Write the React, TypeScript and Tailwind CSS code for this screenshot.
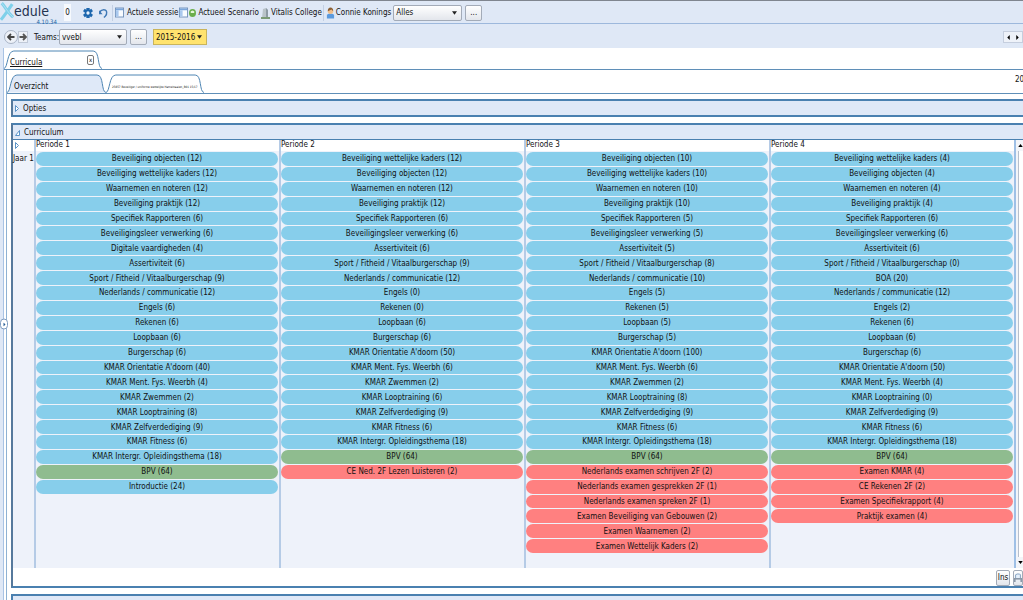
import React from "react";

type Kind = "blue" | "green" | "red";
type Item = { name: string; kind: Kind };

const tone: Record<Kind, string> = {
  blue: "bg-[#87ceeb]",
  green: "bg-[#8fbc8f]",
  red: "bg-[#ff8080]",
};

const make = (blue: string[], rest: [string, Kind][]): Item[] => [
  ...blue.map((name) => ({ name, kind: "blue" as Kind })),
  ...rest.map(([name, kind]) => ({ name, kind })),
];

const periods: { title: string; items: Item[] }[] = [
  {
    title: "Periode 1",
    items: make(
      [
        "Beveiliging objecten (12)", "Beveiliging wettelijke kaders (12)", "Waarnemen en noteren (12)",
        "Beveiliging praktijk (12)", "Specifiek Rapporteren (6)", "Beveiligingsleer verwerking (6)",
        "Digitale vaardigheden (4)", "Assertiviteit (6)", "Sport / Fitheid / Vitaalburgerschap (9)",
        "Nederlands / communicatie (12)", "Engels (6)", "Rekenen (6)", "Loopbaan (6)", "Burgerschap (6)",
        "KMAR Orientatie A'doorn (40)", "KMAR Ment. Fys. Weerbh (4)", "KMAR Zwemmen (2)",
        "KMAR Looptraining (8)", "KMAR Zelfverdediging (9)", "KMAR Fitness (6)",
        "KMAR Intergr. Opleidingsthema (18)",
      ],
      [["BPV (64)", "green"], ["Introductie (24)", "blue"]],
    ),
  },
  {
    title: "Periode 2",
    items: make(
      [
        "Beveiliging wettelijke kaders (12)", "Beveiliging objecten (12)", "Waarnemen en noteren (12)",
        "Beveiliging praktijk (12)", "Specifiek Rapporteren (6)", "Beveiligingsleer verwerking (6)",
        "Assertiviteit (6)", "Sport / Fitheid / Vitaalburgerschap (9)", "Nederlands / communicatie (12)",
        "Engels (0)", "Rekenen (0)", "Loopbaan (6)", "Burgerschap (6)", "KMAR Orientatie A'doorn (50)",
        "KMAR Ment. Fys. Weerbh (6)", "KMAR Zwemmen (2)", "KMAR Looptraining (6)",
        "KMAR Zelfverdediging (9)", "KMAR Fitness (6)", "KMAR Intergr. Opleidingsthema (18)",
      ],
      [["BPV (64)", "green"], ["CE Ned. 2F Lezen Luisteren (2)", "red"]],
    ),
  },
  {
    title: "Periode 3",
    items: make(
      [
        "Beveiliging objecten (10)", "Beveiliging wettelijke kaders (10)", "Waarnemen en noteren (10)",
        "Beveiliging praktijk (10)", "Specifiek Rapporteren (5)", "Beveiligingsleer verwerking (5)",
        "Assertiviteit (5)", "Sport / Fitheid / Vitaalburgerschap (8)", "Nederlands / communicatie (10)",
        "Engels (5)", "Rekenen (5)", "Loopbaan (5)", "Burgerschap (5)", "KMAR Orientatie A'doorn (100)",
        "KMAR Ment. Fys. Weerbh (6)", "KMAR Zwemmen (2)", "KMAR Looptraining (8)",
        "KMAR Zelfverdediging (9)", "KMAR Fitness (6)", "KMAR Intergr. Opleidingsthema (18)",
      ],
      [
        ["BPV (64)", "green"], ["Nederlands examen schrijven 2F (2)", "red"],
        ["Nederlands examen gesprekken 2F (1)", "red"], ["Nederlands examen spreken 2F (1)", "red"],
        ["Examen Beveiliging van Gebouwen (2)", "red"], ["Examen Waarnemen (2)", "red"],
        ["Examen Wettelijk Kaders (2)", "red"],
      ],
    ),
  },
  {
    title: "Periode 4",
    items: make(
      [
        "Beveiliging wettelijke kaders (4)", "Beveiliging objecten (4)", "Waarnemen en noteren (4)",
        "Beveiliging praktijk (4)", "Specifiek Rapporteren (6)", "Beveiligingsleer verwerking (6)",
        "Assertiviteit (6)", "Sport / Fitheid / Vitaalburgerschap (0)", "BOA (20)",
        "Nederlands / communicatie (12)", "Engels (2)", "Rekenen (6)", "Loopbaan (6)", "Burgerschap (6)",
        "KMAR Orientatie A'doorn (50)", "KMAR Ment. Fys. Weerbh (4)", "KMAR Looptraining (0)",
        "KMAR Zelfverdediging (9)", "KMAR Fitness (6)", "KMAR Intergr. Opleidingsthema (18)",
      ],
      [
        ["BPV (64)", "green"], ["Examen KMAR (4)", "red"], ["CE Rekenen 2F (2)", "red"],
        ["Examen Specifiekrapport (4)", "red"], ["Praktijk examen (4)", "red"],
      ],
    ),
  },
];

const btn =
  "flex h-4 shrink-0 items-center justify-center rounded-xs border border-[#a3abb8] bg-linear-to-b from-white to-[#e3e6ec]";

const select = "h-4 rounded-xs border border-[#a3abb8] bg-linear-to-b from-white to-[#e3e6ec]";

function Picker({ label, value, className }: { label: string; value: string; className: string }) {
  return (
    <span className={`grid shrink-0 items-center ${className}`}>
      <select
        aria-label={label}
        className="col-start-1 row-start-1 h-full w-full appearance-none bg-transparent pt-px pl-[2px] outline-none"
        defaultValue={value}
      >
        <option>{value}</option>
      </select>
      <svg viewBox="0 0 6 4" className="pointer-events-none col-start-1 row-start-1 mr-1 h-1 w-[5px] justify-self-end">
        <path d="M0 0h6L3 4z" fill="#222" />
      </svg>
    </span>
  );
}

function Logo() {
  return (
    <div className="flex h-[23px] w-[60px] shrink-0 items-start">
      <svg viewBox="0 0 16 21" className="h-[21px] w-[14px] shrink-0">
        <path d="M2 1C6 5 9 12 15 17M14 2C10 8 6 14 1 20" stroke="#7fd0ea" strokeWidth="3.500" fill="none" />
        <path d="M2 1C6 5 9 12 15 17" stroke="#b5e3f3" strokeWidth="1" fill="none" />
      </svg>
      <div className="flex flex-1 flex-col gap-[2px] pt-1">
        <span className="text-sm leading-3 text-[#1f3350]">edule</span>
        <span className="pr-[3px] text-right text-[6px] leading-[6px] text-[#2166a5]">4.10.34</span>
      </div>
    </div>
  );
}

function WindowIcon() {
  return (
    <svg viewBox="0 0 10 11" className="h-[11px] w-[9px] shrink-0">
      <rect x=".5" y=".5" width="9" height="10" fill="#f8fbff" stroke="#6f8fb8" />
      <path d="M1 2h8" stroke="#7ba7dc" strokeWidth="2" />
      <path d="M1 3h3v7H1z" fill="#a9c8ee" />
    </svg>
  );
}

function Tab({ label, fill, className, labelClass, children }: { label: string; fill: string; className: string; labelClass: string; children?: React.ReactNode }) {
  return (
    <div className={`grid h-[19px] shrink-0 ${className}`}>
      <svg viewBox="0 0 100 19" preserveAspectRatio="none" className="col-start-1 row-start-1 h-[19px] w-full">
        <path d="M0 18.500C4 18 3 1 10 1H91C98 1 95 18 100 18.500" fill={fill} stroke="#4f86b4" vectorEffect="non-scaling-stroke" />
      </svg>
      <div className="col-start-1 row-start-1 flex min-w-0 items-center">
        <button role="tab" className={`min-w-0 flex-1 pt-[6px] text-left whitespace-nowrap ${labelClass}`}>{label}</button>
        {children}
      </div>
    </div>
  );
}

const panel = "border-y-2 border-l-2 border-y-[#4a80b0] border-l-[#56799c]";

export default function App() {
  return (
    <div className="flex min-h-screen flex-col overflow-hidden bg-white font-['DejaVu_Sans_Condensed','DejaVu_Sans',sans-serif] text-[8px] leading-[10px] text-[#111]">
      <header className="flex h-6 items-center border-t border-b border-t-[#7f858f] border-b-[#9db8dc] bg-[#dfe8f6] pt-px whitespace-nowrap">
        <Logo />
        <span className="ml-1 flex h-[17px] w-[7px] items-center justify-center bg-[#f6f9fd]">0</span>
        <button aria-label="Instellingen" className="ml-3">
          <svg viewBox="0 0 12 12" className="h-3 w-[10px]">
            <path d="M4 0h4v2l2-1 2 3-2 1v2l2 1-2 3-2-1v2H4v-2l-2 1-2-3 2-1V5L0 4l2-3 2 1z" fill="#1c66ad" />
            <circle cx="6" cy="6" r="2" fill="#e8f1fb" />
          </svg>
        </button>
        <button aria-label="Vernieuwen" className="ml-[6px]">
          <svg viewBox="0 0 10 12" className="h-3 w-[9px]">
            <path d="M1 6C1 2 8 1 8.500 5s-1 4-3 6" fill="none" stroke="#3f78b5" strokeWidth="1.600" />
            <path d="M0 3v4.500h4z" fill="#3f78b5" />
          </svg>
        </button>
        <span className="ml-1 h-4 border-l border-[#c3d0e4]" />
        <button className="ml-[2px] flex items-center gap-[3px]"><WindowIcon />Actuele sessie</button>
        <span className="ml-px flex items-center"><WindowIcon /></span>
        <button className="ml-px flex items-center gap-[2px]">
          <svg viewBox="0 0 8 10" className="h-[10px] w-[7px]">
            <ellipse cx="4" cy="5" rx="4" ry="4.500" fill="#6bae4c" />
            <path d="M2 3l2-1 2 1v2H2z" fill="#e4f5d8" />
          </svg>
          Actueel Scenario
        </button>
        <button className="ml-[2px] flex items-center gap-px">
          <svg viewBox="0 0 9 12" className="h-3 w-[9px]">
            <path d="M2 2l3-1 2 2v8H1z" fill="#b9c3c9" />
            <path d="M5 1l2 2v8H5z" fill="#8d9aa3" />
            <path d="M0 11h9" stroke="#7b9a76" strokeWidth="2" />
          </svg>
          Vitalis College
        </button>
        <span className="ml-px h-4 border-l border-[#c3d0e4]" />
        <button className="ml-[2px] flex items-center gap-px">
          <svg viewBox="0 0 10 12" className="h-3 w-[9px]">
            <path d="M1 12V8q4-3 8 0v4z" fill="#5b9ade" />
            <circle cx="5" cy="4" r="3" fill="#f0be8b" />
            <path d="M2 4q0-4 3-4t3 4L6 2z" fill="#8a5f35" />
          </svg>
          Connie Konings
        </button>
        <Picker label="Filter" value="Alles" className={`ml-[2px] w-[69px] ${select}`} />
        <button className={`ml-[3px] w-[17px] ${btn}`}>...</button>
      </header>

      <div className="flex h-6 items-center bg-[#dfe8f6] pt-[2px] pl-1 whitespace-nowrap">
        <button aria-label="Terug" className="flex size-[14px] items-center justify-center rounded-full border border-[#a9b4c6] bg-[#edf1f8]">
          <svg viewBox="0 0 8 8" className="size-2"><path d="M7.500 4H1.500M4 1L1 4l3 3" stroke="#444" strokeWidth="1.800" fill="none" /></svg>
        </button>
        <button aria-label="Vooruit" className="flex h-3 w-[10px] items-center justify-center border border-[#c0c9d8] bg-[#edf1f8]">
          <svg viewBox="0 0 8 8" className="size-2"><path d="M.5 4h6M4 1l3 3-3 3" stroke="#555" strokeWidth="1.800" fill="none" /></svg>
        </button>
        <span className="ml-[6px] w-[25px] pt-px">Teams:</span>
        <Picker label="Teams" value="vvebl" className={`w-[68px] ${select}`} />
        <button className={`ml-[3px] w-[17px] ${btn}`}>...</button>
        <Picker label="Schooljaar" value="2015-2016" className="ml-[6px] h-4 w-[54px] border border-[#c9b45c] bg-[#ffe36e]" />
        <div className="ml-auto flex h-3 w-5 items-center justify-around border border-[#c5cede] bg-[#eef2f9]">
          <button aria-label="Vorige"><svg viewBox="0 0 3 6" className="h-[5px] w-[3px]"><path d="M3 0v6L0 3z" /></svg></button>
          <button aria-label="Volgende"><svg viewBox="0 0 3 6" className="h-[5px] w-[3px]"><path d="M0 0v6l3-3z" /></svg></button>
        </div>
      </div>

      <div className="flex flex-1">
        <div className="relative w-1 shrink-0 border-r border-[#a9c3e4] bg-[#dfe8f6]">
          <button aria-label="Zijbalk" className="absolute top-1/2 left-0 flex h-[11px] w-2 -translate-y-1/2 items-center justify-center rounded-full border border-[#7f9cc0] bg-white">
            <svg viewBox="0 0 3 6" className="h-1 w-[3px]"><path d="M0 0v6l3-3z" fill="#2a5f96" /></svg>
          </button>
        </div>
        <main className="flex min-w-0 flex-1 flex-col">
          <div className="flex h-[22px] items-end border-b border-[#5f8fb8]">
            <Tab label="Curricula" fill="#fff" className="w-[98px]" labelClass="pl-[6px] underline">
              <button aria-label="Sluiten" className="mr-2 flex h-[10px] w-[7px] items-center justify-center rounded-xs border border-[#777] text-[6px]">x</button>
            </Tab>
          </div>
          <div className="ml-[2px] flex flex-1 flex-col border-l border-[#8fb2d4]">
            <div className="flex h-6 items-end border-b border-[#5f8fb8]">
              <Tab label="Overzicht" fill="#dfe9f8" className="w-[99px]" labelClass="pl-[7px]" />
              <Tab label="25657 Beveiliger / uniforme wettelijke Hamelnaaien_B01 15/17" fill="#fff" className="w-[98px]" labelClass="pl-[6px] text-[3px]" />
              <span className="mb-1 ml-auto w-2 self-center whitespace-nowrap">20</span>
            </div>
            <div className="flex flex-1 flex-col gap-[6px] pt-[5px] pl-1">
              <section className={`h-[18px] bg-[#dfe8f7] ${panel}`}>
                <button className="flex h-full items-center gap-1 pt-px pl-[2px]">
                  <svg viewBox="0 0 4 7" className="h-[7px] w-1"><path d="M.5.5v6l3-3z" fill="#fff" stroke="#5a93c8" /></svg>
                  Opties
                </button>
              </section>
              <section className={`flex flex-1 flex-col ${panel}`}>
                <button className="flex h-[15px] w-full shrink-0 items-center gap-1 border-b border-[#4a80b0] bg-[#dfe8f7] pt-[2px] pl-[2px]">
                  <svg viewBox="0 0 5 6" className="h-[6px] w-[5px]"><path d="M.5 5.500h4v-5z" fill="#fff" stroke="#5a93c8" /></svg>
                  Curriculum
                </button>
                <div className="flex flex-1">
                  <div className="flex flex-1">
                    <div className="flex w-[21px] shrink-0 flex-col whitespace-nowrap">
                      <span className="flex h-[11px] items-center pl-[2px]"><svg viewBox="0 0 4 7" className="h-[7px] w-1"><path d="M.5.5v6l3-3z" fill="#fff" stroke="#5a93c8" /></svg></span>
                      <div className="flex-1 bg-[#eef2fa] pt-[3px]">Jaar 1</div>
                    </div>
                    {periods.map((p) => (
                      <section key={p.title} className="flex flex-1 flex-col border-l-2 border-[#b5cbe6]">
                        <h3 className="h-[11px]">{p.title}</h3>
                        <ul className="grid flex-1 grid-rows-[repeat(28,minmax(0,1fr))] bg-[#eef2fa] pr-px">
                          {p.items.map((item) => (
                            <li key={item.name} className={`mt-px flex items-center justify-center rounded-full pt-px ${tone[item.kind]}`}>{item.name}</li>
                          ))}
                        </ul>
                      </section>
                    ))}
                  </div>
                  <div className="flex w-[9px] shrink-0 flex-col items-end justify-between border-l-2 border-[#9fc0e6] bg-[#f3f5f9] py-1">
                    <button aria-label="Omhoog"><svg viewBox="0 0 6 4" className="h-[3px] w-[5px]"><path d="M3 0l3 4H0z" /></svg></button>
                    <span className="my-1 w-[5px] flex-1 border-l border-[#b7bfcc] bg-white" />
                    <button aria-label="Omlaag"><svg viewBox="0 0 6 4" className="h-[3px] w-[5px]"><path d="M0 0h6L3 4z" /></svg></button>
                  </div>
                </div>
                <div className="flex h-[18px] items-center justify-end gap-[3px] pt-px">
                  <button className={`w-[14px] ${btn}`}>Ins</button>
                  <button aria-label="Afdrukken" className={`w-[10px] ${btn}`}>
                    <svg viewBox="0 0 10 12" className="h-3 w-[9px]">
                      <path d="M2 6V2l2-1h3l1 1v4" fill="#e6f0fb" stroke="#6d8fb5" />
                      <path d="M0 6h10v5H0z" fill="#8b98a8" />
                      <path d="M2 8h6v3H2z" fill="#e8edf3" />
                    </svg>
                  </button>
                </div>
              </section>
              <section className="h-[6px] border-t-2 border-l-2 border-[#4a80b0] bg-[#dfe8f7]" />
            </div>
          </div>
        </main>
      </div>
    </div>
  );
}
